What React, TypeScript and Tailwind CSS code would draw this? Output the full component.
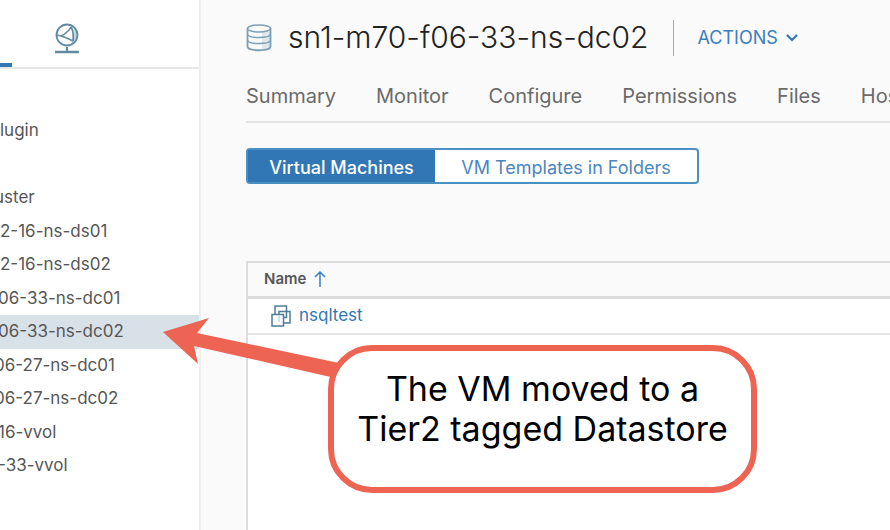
import clsx from "clsx";

const treeItems = [
  { label: "lugin", shift: "" },
  { label: "", shift: "" },
  { label: "uster", shift: "-ml-1.5" },
  { label: "2-16-ns-ds01", shift: "" },
  { label: "2-16-ns-ds02", shift: "" },
  { label: "06-33-ns-dc01", shift: "-ml-0.5" },
  { label: "06-33-ns-dc02", shift: "-ml-0.5", selected: true },
  { label: "06-27-ns-dc01", shift: "-ml-1.5" },
  { label: "06-27-ns-dc02", shift: "-ml-1.5" },
  { label: "16-vvol", shift: "-ml-0.5" },
  { label: "-33-vvol", shift: "-ml-0.5" },
];

const tabs = ["Summary", "Monitor", "Configure", "Permissions", "Files", "Hosts"];

function NetworkIcon() {
  return (
    <svg width="26" height="32" viewBox="0 0 26 32" fill="none" stroke="#5f8aa3">
      <path d="M18 4 L23 9 V16 L18 21 Z" fill="#c9d8e1" stroke="none" />
      <circle cx="13" cy="12" r="10.5" strokeWidth="1.8" />
      <path d="M3 12 L7 13 C11 11 15 8 17 4 M7 13 C11 14 15 16 19 18 M17 4 C19 8 20 13 19 18" strokeWidth="1.6" />
      <path d="M13 24 V28" strokeWidth="2" />
      <path d="M1 29 H25" strokeWidth="2.5" />
    </svg>
  );
}

function DatastoreIcon() {
  return (
    <svg width="26" height="28" viewBox="0 0 26 28" fill="none" stroke="#7d9fb5" strokeWidth="1.5">
      <path d="M16 8 H24 V23 L16 26 Z" fill="#dfe8ee" stroke="none" />
      <ellipse cx="13" cy="4.5" rx="11.5" ry="3.5" fill="#fafafa" />
      <path d="M1.5 4.5 V22.5 C1.5 27.5 24.5 27.5 24.5 22.5 V4.5" strokeWidth="1.8" />
      <path d="M1.5 10.5 C3 14.5 23 14.5 24.5 10.5 M1.5 16.5 C3 20.5 23 20.5 24.5 16.5" />
    </svg>
  );
}

function VmIcon() {
  return (
    <svg width="20" height="22" viewBox="0 0 20 22" fill="none" stroke="#4d7c96" strokeWidth="1.5">
      <path d="M4 9 V1 H15.5 V6.5" />
      <path d="M8 9 V6.5 H19 V18 H13" />
      <path d="M1 9.5 H12.5 V21 H1 Z" />
      <path d="M12.5 12.5 H15.5 V6.5" />
      <path d="M8 11 V17" stroke="#c5d5de" />
    </svg>
  );
}

function Sidebar() {
  return (
    <aside className="w-[201px] shrink-0 overflow-hidden border-r-2 border-[#eeeeee] bg-white">
      <div className="flex h-[69px] items-end border-b-2 border-[#e6e6e6]">
        <div className="h-1 w-3 bg-[#3277b5]" />
        <button aria-label="Networking" className="mb-3 ml-[42px] h-8">
          <NetworkIcon />
        </button>
      </div>
      <ul className="mt-[45px] grid h-[369px] auto-rows-fr text-[17px] text-[#565656]">
        {treeItems.map((item, i) => (
          <li
            key={i}
            className={clsx("flex items-center whitespace-nowrap", item.selected && "bg-[#d9e1e8]")}
          >
            <span className={item.shift}>{item.label}</span>
          </li>
        ))}
      </ul>
    </aside>
  );
}

function Header() {
  return (
    <header className="flex h-[75px] items-center pl-[45px]">
      <DatastoreIcon />
      <h1 className="ml-4 whitespace-nowrap text-[30px] font-light text-[#222222]">sn1-m70-f06-33-ns-dc02</h1>
      <div className="ml-6 h-9 w-px bg-[#aaaaaa]" />
      <button className="ml-6 flex items-center gap-2 text-[18px] text-[#3b7fbd]">
        ACTIONS
        <svg width="12" height="8" viewBox="0 0 12 8" fill="none" stroke="#3277b5" strokeWidth="2.2">
          <path d="M1 1 L6 6 L11 1" />
        </svg>
      </button>
    </header>
  );
}

function VmTable() {
  return (
    <div className="mt-[77px] flex-1 border-l-2 border-t-2 border-[#dcdcdc] bg-white">
      <table className="w-full text-left">
        <thead>
          <tr className="h-[34px] border-b-[3px] border-[#dcdcdc] bg-[#fafafa]">
            <th className="pl-4 text-[15px] font-semibold text-[#565656]">
              <span className="flex items-center gap-2">
                Name
                <svg width="12" height="16" viewBox="0 0 12 16" fill="none" stroke="#3b82c4" strokeWidth="1.5">
                  <path d="M6 16 V1 M1 6 L6 1 L11 6" />
                </svg>
              </span>
            </th>
          </tr>
        </thead>
        <tbody>
          <tr className="h-[37px] border-b-2 border-[#e4e4e4]">
            <td className="pl-[23px]">
              <a href="#" className="flex items-center gap-2 text-[17px] text-[#3277b5]">
                <VmIcon />
                nsqltest
              </a>
            </td>
          </tr>
        </tbody>
      </table>
    </div>
  );
}

function Callout() {
  return (
    <>
      <svg className="absolute left-[163px] top-[318px]" width="180" height="62" viewBox="0 0 180 62">
        <path d="M0 14 L46 0 L34 15 L176 45 L172 60 L31 28 L35 46 Z" fill="#ed6453" />
      </svg>
      <div className="absolute left-[328px] top-[345px] h-[148px] w-[429px] rounded-[44px] border-[6px] border-[#ed6453] bg-white pt-[18px] text-center text-[34px] leading-10 text-black">
        The VM moved to a
        <br />
        Tier2 tagged Datastore
      </div>
    </>
  );
}

export default function App() {
  return (
    <div className="relative flex min-h-screen overflow-hidden bg-[#fafafa] font-[Inter,sans-serif]">
      <Sidebar />
      <main className="flex min-w-0 flex-1 flex-col overflow-hidden">
        <Header />
        <div className="flex flex-1 flex-col pl-[45px]">
          <nav className="flex h-12 gap-10 border-b-2 border-[#e2e2e2] text-[20px] text-[#6a6a6a]">
            {tabs.map((tab) => (
              <a key={tab} href="#" className="pt-1.5">
                {tab}
              </a>
            ))}
          </nav>
          <div className="mt-[25px] flex h-9 self-start whitespace-nowrap rounded border-2 border-[#4a90c2] bg-white text-[18px]">
            <button className="min-w-[187px] bg-[#3277b5] px-5 pt-0.5 font-medium text-white">Virtual Machines</button>
            <button className="min-w-[262px] px-5 pt-0.5 text-[#4a86bf]">VM Templates in Folders</button>
          </div>
          <VmTable />
        </div>
      </main>
      <Callout />
    </div>
  );
}
